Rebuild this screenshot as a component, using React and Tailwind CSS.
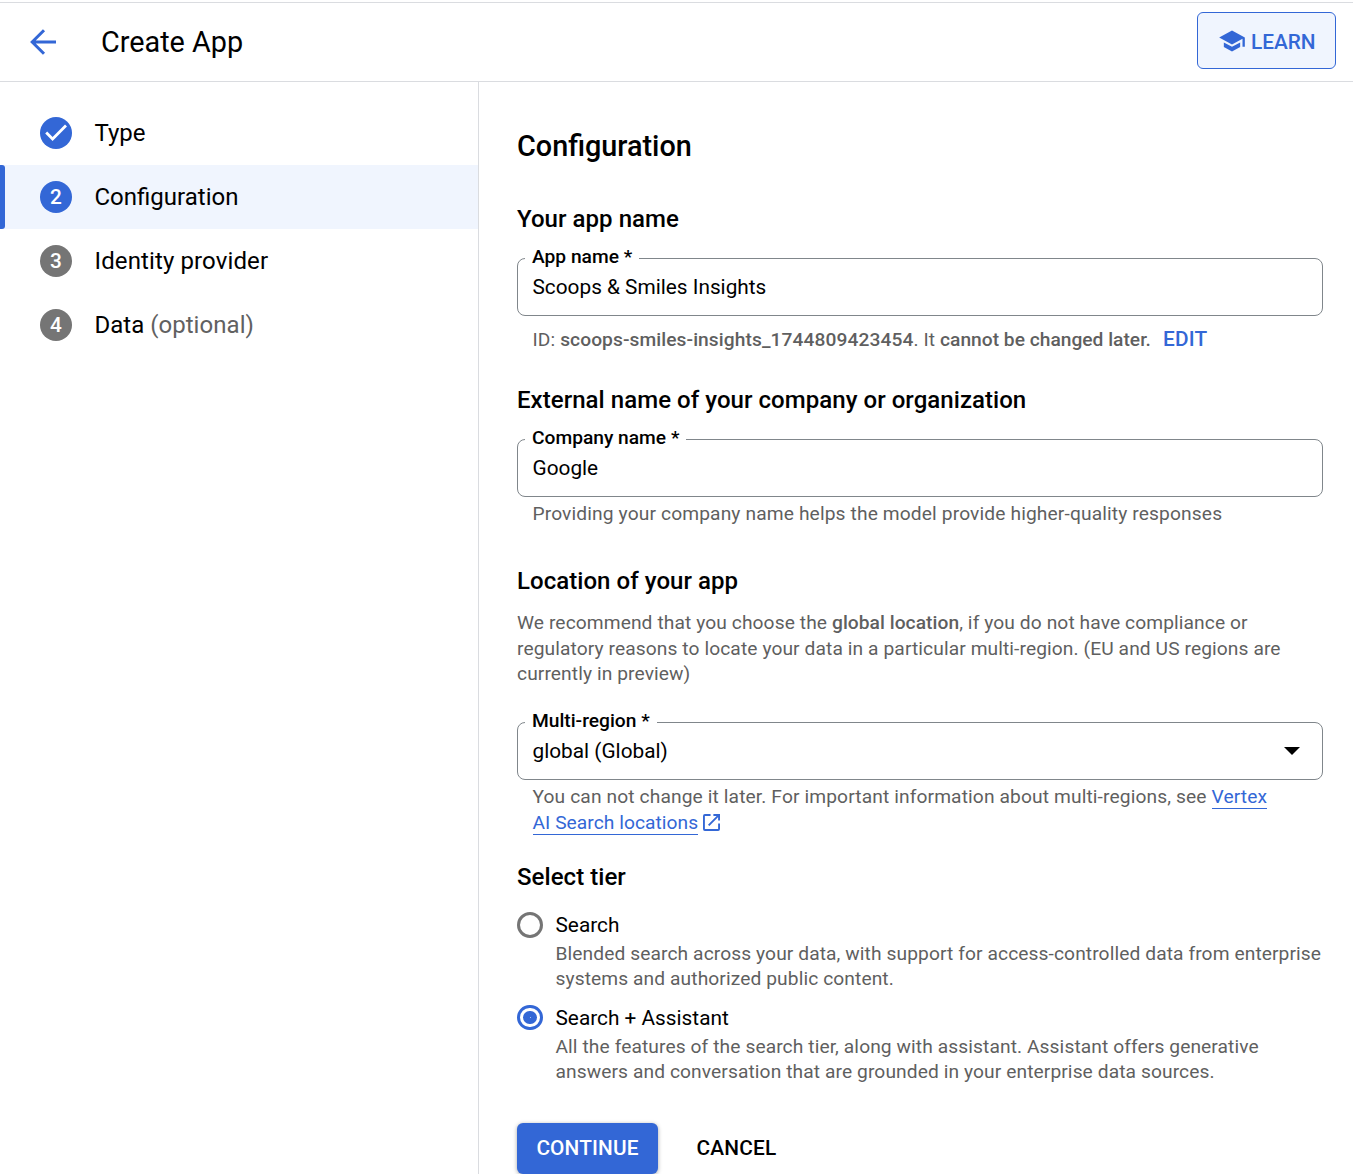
const steps = [
  { label: "Type", done: true },
  { label: "Configuration", number: 2, active: true },
  { label: "Identity provider", number: 3 },
  { label: "Data", number: 4, optional: true },
];

function Step({ label, number, done, active, optional }) {
  return (
    <li className={`relative flex h-16 items-center pl-10 ${active ? "bg-[#f0f5fe]" : ""}`}>
      {active && <span className="absolute inset-y-0 left-0 w-[5px] rounded-r-[3px] bg-[#3367d6]" />}
      <span
        className={`flex size-8 items-center justify-center rounded-full text-[20.8px] font-medium text-white ${
          done || active ? "bg-[#3367d6]" : "bg-[#757575]"
        }`}
      >
        {done ? (
          <svg viewBox="0 0 32 32" className="size-8" fill="none" stroke="#fff" strokeWidth="2.8">
            <path d="M6.2 15.6 12.6 22 26 8.6" />
          </svg>
        ) : (
          <span className="leading-8">{number}</span>
        )}
      </span>
      <span className={`ml-[22.5px] text-[24px] leading-8 ${number === 3 ? "tracking-[0.12px]" : ""}`}>
        {label} {optional && <span className="tracking-[0.05px] text-[#616161]">(optional)</span>}
      </span>
    </li>
  );
}

function Section({ children, className }) {
  return (
    <h2 className={`h-8 text-[24px] leading-8 font-medium tracking-[0.05px] whitespace-nowrap ${className}`}>
      {children}
    </h2>
  );
}

function Field({ label, value, select, className }) {
  return (
    <div className={`relative flex h-[58px] items-center justify-between rounded-[8px] border border-[#80868b] pr-[22px] pl-[14.5px] ${className}`}>
      <span className="absolute -top-[14px] left-[7px] bg-white px-[7px] text-[19.2px] leading-[24px] font-medium">
        {label} *
      </span>
      <span className="text-[20.8px] leading-7">{value}</span>
      {select && (
        <svg viewBox="0 0 16 8" className="h-2 w-4">
          <path d="M0 0h16L8 8z" />
        </svg>
      )}
    </div>
  );
}

function Tier({ title, lines, checked, className }) {
  return (
    <div className={`flex ${className}`}>
      <span
        className={`mt-[2px] flex w-[26px] shrink-0 items-center justify-center rounded-full border-[3px] ${
          checked ? "h-[25px] border-[#3367d6]" : "h-[26px] border-[#757575]"
        }`}
      >
        {checked && (
          <span className="flex h-[13px] w-[14px] items-center justify-center rounded-full bg-[#3367d6]">
            <span className="size-px bg-[#a9bfee]" />
          </span>
        )}
      </span>
      <div className="ml-[12.5px]">
        <div className="h-[31px] text-[20.8px] leading-[30px]">{title}</div>
        <p className="h-[50px] text-[19.2px] leading-[25.4px] tracking-[0.095px] whitespace-nowrap text-[#5f5f5f]">
          {lines[0]}
          <br />
          {lines[1]}
        </p>
      </div>
    </div>
  );
}

export default function App() {
  return (
    <div className="flex h-[1174px] w-[1353px] flex-col overflow-hidden bg-white pt-[2px] font-['Roboto',sans-serif] text-black">
      <header className="flex h-20 shrink-0 items-center border-y border-[#dadce0] pr-[17px] pl-[30px]">
        <svg viewBox="0 0 26 26" className="size-[26px]" fill="none" stroke="#3367d6" strokeWidth="3">
          <path d="M26 13H2.5M14 1.2 2.2 13 14 24.8" />
        </svg>
        <h1 className="ml-[45px] text-[28.8px] leading-8">Create App</h1>
        <button className="mb-[3px] ml-auto flex h-[57px] w-[139px] items-center rounded-[6px] border border-[#3367d6] bg-[#f0f5fe] pl-[19.5px] text-[20.8px] leading-7 font-medium text-[#3367d6]">
          <svg viewBox="0 0 24 24" className="size-[28px] shrink-0" fill="currentColor">
            <path d="M5 13.18v4L12 21l7-3.82v-4L12 17l-7-3.82zM12 3 1 9l11 6 9-4.91V17h2V9L12 3z" />
          </svg>
          <span className="mt-[3px] ml-[5.5px]">LEARN</span>
        </button>
      </header>
      <div className="flex min-h-0 flex-1">
        <ol className="w-[479px] shrink-0 border-r border-[#dadce0] pt-[19px]">
          {steps.map((step) => (
            <Step key={step.label} {...step} />
          ))}
        </ol>
        <main className="w-[844px] pt-[49px] pl-[38px]">
          <h1 className="h-8 text-[28.8px] leading-[31px] font-medium">Configuration</h1>
          <Section className="mt-10">Your app name</Section>
          <Field label="App name" value={"Scoops & Smiles Insights"} className="mt-[23px]" />
          <p className="mt-[10px] h-[27px] pl-[15.5px] text-[19.2px] leading-[26px] tracking-[0.1px] whitespace-nowrap text-[#5f5f5f]">
            ID: <span className="font-medium tracking-[0.08px]">scoops-smiles-insights_1744809423454</span>. It{" "}
            <span className="font-medium tracking-[0.01px]">cannot be changed later.</span>
            <button className="ml-[12px] text-[20.8px] font-medium tracking-[0.2px] text-[#3367d6]">EDIT</button>
          </p>
          <Section className="mt-[31px]">External name of your company or organization</Section>
          <Field label="Company name" value="Google" className="mt-[23px]" />
          <p className="mt-[4px] h-[26px] pl-[15.5px] text-[19.2px] leading-[26px] tracking-[0.13px] whitespace-nowrap text-[#5f5f5f]">
            Providing your company name helps the model provide higher-quality responses
          </p>
          <Section className="mt-[38px]">Location of your app</Section>
          <p className="mt-[13px] h-[77px] text-[19.2px] leading-[25.5px] tracking-[0.095px] whitespace-nowrap text-[#5f5f5f]">
            We recommend that you choose the <span className="font-medium tracking-[0.05px]">global location</span>, if you do not have compliance or
            <br />
            regulatory reasons to locate your data in a particular multi-region. (EU and US regions are
            <br />
            currently in preview)
          </p>
          <Field label="Multi-region" value="global (Global)" select className="mt-[35px]" />
          <p className="mt-[4px] h-[52px] pl-[15.5px] text-[19.2px] leading-[26px] tracking-[0.12px] whitespace-nowrap text-[#5f5f5f]">
            You can not change it later. For important information about multi-regions, see{" "}
            <a className="border-b border-[#3367d6] text-[#3367d6]">Vertex</a>
            <br />
            <a className="border-b border-[#3367d6] tracking-[0.05px] text-[#3367d6]">AI Search locations</a>
            <svg viewBox="0 0 18 18" className="ml-[4.5px] inline size-[17px] align-[-2px]" fill="none" stroke="#3367d6" strokeWidth="2">
              <path d="M8 1H2a1 1 0 0 0-1 1v14a1 1 0 0 0 1 1h14a1 1 0 0 0 1-1v-6M11 1h6v6M17 1 6 12" />
            </svg>
          </p>
          <Section className="mt-[25px]">Select tier</Section>
          <Tier
            title="Search"
            lines={[
              "Blended search across your data, with support for access-controlled data from enterprise",
              "systems and authorized public content.",
            ]}
            className="mt-[17px]"
          />
          <Tier
            checked
            title="Search + Assistant"
            lines={[
              "All the features of the search tier, along with assistant. Assistant offers generative",
              "answers and conversation that are grounded in your enterprise data sources.",
            ]}
            className="mt-[12px]"
          />
          <div className="mt-[39px] flex">
            <button className="h-[51px] w-[141px] rounded-[6px] bg-[#3367d6] text-[20.8px] font-medium tracking-[0.15px] text-white shadow-[0_1px_4px_rgba(0,0,0,0.35)]">
              CONTINUE
            </button>
            <button className="ml-[38.5px] text-[20.8px] font-medium tracking-[0.2px]">CANCEL</button>
          </div>
        </main>
      </div>
    </div>
  );
}
